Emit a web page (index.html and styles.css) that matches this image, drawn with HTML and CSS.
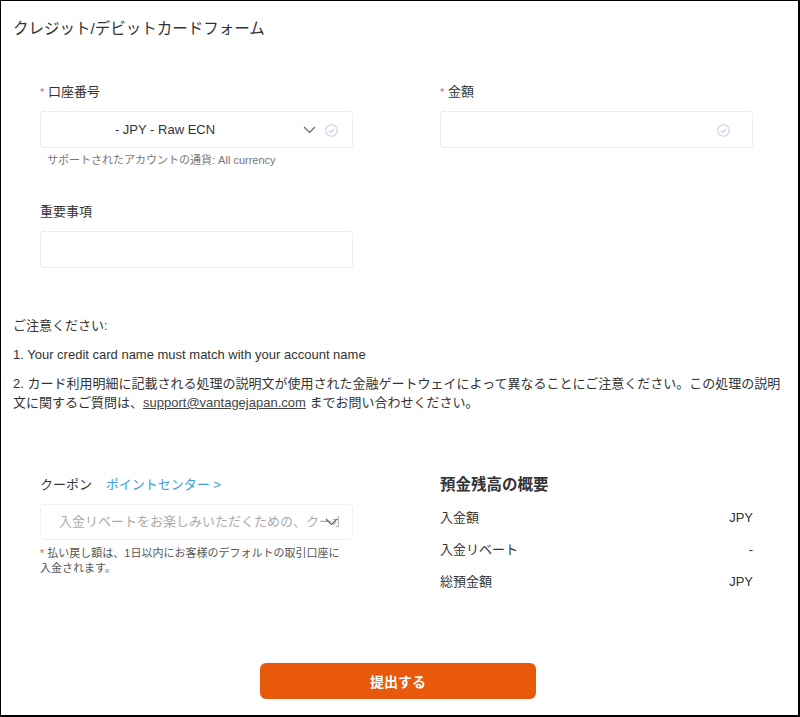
FILE: index.html
```html
<!DOCTYPE html>
<html lang="ja">
<head>
    <meta charset="UTF-8">
    <meta name="viewport" content="width=device-width, initial-scale=1.0">
    <title>クレジット/デビットカードフォーム</title>
    <link rel="stylesheet" href="styles.css">
</head>
<body>
<div class="page">
    <h2 class="title">クレジット/デビットカードフォーム</h2>

    <div class="form-row">
        <div class="field">
            <label class="label"><span class="req">*</span> 口座番号</label>
            <div class="box select">
                <span class="select-text">- JPY - Raw ECN</span>
                <svg class="chev" width="13" height="8" viewBox="0 0 13 8"><path d="M1 1l5.5 5.5L12 1" fill="none" stroke="#666" stroke-width="1.2"/></svg>
                <svg class="ok" width="13" height="13" viewBox="0 0 13 13"><circle cx="6.5" cy="6.5" r="5.7" fill="none" stroke="#c9c9ef" stroke-width="1.1"/><path d="M3.8 6.6l1.9 1.8 3.4-3.5" fill="none" stroke="#c9c9ef" stroke-width="1.1"/></svg>
            </div>
            <p class="hint">サポートされたアカウントの通貨: All currency</p>
        </div>
        <div class="field">
            <label class="label"><span class="req">*</span> 金額</label>
            <div class="box">
                <svg class="ok wide" width="13" height="13" viewBox="0 0 13 13"><circle cx="6.5" cy="6.5" r="5.7" fill="none" stroke="#c9c9ef" stroke-width="1.1"/><path d="M3.8 6.6l1.9 1.8 3.4-3.5" fill="none" stroke="#c9c9ef" stroke-width="1.1"/></svg>
            </div>
        </div>
    </div>

    <div class="form-row second">
        <div class="field">
            <label class="label">重要事項</label>
            <div class="box"></div>
        </div>
    </div>

    <div class="notice">
        <p>ご注意ください:</p>
        <p>1. Your credit card name must match with your account name</p>
        <p>2. カード利用明細に記載される処理の説明文が使用された金融ゲートウェイによって異なることにご注意ください。この処理の説明文に関するご質問は、<a href="#">support@vantagejapan.com</a> までお問い合わせください。</p>
    </div>

    <div class="form-row bottom">
        <div class="field">
            <div class="label">クーポン <a class="points" href="#">ポイントセンター &gt;</a></div>
            <div class="box coupon">
                <span class="placeholder">入金リベートをお楽しみいただくための、クーポンを選択してください</span>
                <svg class="chev" width="13" height="8" viewBox="0 0 13 8"><path d="M1 1l5.5 5.5L12 1" fill="none" stroke="#666" stroke-width="1.2"/></svg>
            </div>
            <p class="refund"><span class="req">*</span> 払い戻し額は、1日以内にお客様のデフォルトの取引口座に入金されます。</p>
        </div>
        <div class="summary">
            <h3>預金残高の概要</h3>
            <div class="row"><span>入金額</span><span>JPY</span></div>
            <div class="row"><span>入金リベート</span><span>-</span></div>
            <div class="row"><span>総預金額</span><span>JPY</span></div>
        </div>
    </div>

    <div class="actions">
        <button class="submit">提出する</button>
    </div>
</div>
</body>
</html>
```

FILE: styles.css
```css
body {
    margin: 0;
    font-family: "Liberation Sans", "Noto Sans CJK JP", sans-serif;
    color: #333;
}
.page {
    width: 800px;
    height: 717px;
    box-sizing: border-box;
    border: 1px solid #000;
    border-right-width: 2px;
    border-bottom-width: 2px;
    padding: 0 12px;
}
.title {
    margin: 18px 0 0;
    font-size: 15.5px;
    line-height: 20px;
    font-weight: normal;
    color: #333;
}
.form-row {
    display: grid;
    grid-template-columns: 313px 313px;
    column-gap: 87px;
    padding-left: 27px;
    margin-top: 44px;
}
.form-row.second {
    margin-top: 35px;
}
.label {
    display: block;
    font-size: 13px;
    line-height: 18px;
    margin-bottom: 10px;
}
.req {
    color: #e0654a;
    font-size: 11px;
}
.box {
    position: relative;
    height: 37px;
    box-sizing: border-box;
    border: 1px dotted #d9d9d9;
    border-radius: 4px;
}
.select {
    display: flex;
    align-items: center;
}
.select-text {
    flex: 1;
    text-align: center;
    padding-right: 63px;
    font-size: 13px;
}
.chev {
    position: absolute;
    right: 36px;
    top: 14px;
}
.ok {
    position: absolute;
    right: 14px;
    top: 12px;
}
.ok.wide {
    right: 22px;
}
.hint {
    margin: 4px 0 0 7px;
    font-size: 11px;
    line-height: 16px;
    color: #777;
}
.notice {
    margin-top: 48px;
    font-size: 13px;
    line-height: 19px;
}
.notice p {
    margin: 0 0 10px;
}
.notice a {
    color: #444;
}
.form-row.bottom {
    margin-top: 64px;
}
.points {
    color: #3a9fd6;
    text-decoration: none;
    margin-left: 10px;
}
.coupon {
    height: 36px;
    overflow: hidden;
    border-color: #e3e3e3;
}
.placeholder {
    display: block;
    white-space: nowrap;
    overflow: hidden;
    width: 280px;
    padding-left: 18px;
    line-height: 34px;
    font-size: 13px;
    color: #aaa;
}
.coupon .chev {
    right: 14px;
    top: 13px;
}
.refund {
    margin: 6px 0 0;
    font-size: 11px;
    line-height: 15px;
    color: #555;
    width: 310px;
}
.summary h3 {
    margin: 0;
    font-size: 15.5px;
    line-height: 18px;
    font-weight: bold;
    color: #333;
}
.summary .row {
    display: flex;
    justify-content: space-between;
    font-size: 13px;
    line-height: 20px;
    margin-top: 12px;
}
.summary .row:first-of-type {
    margin-top: 14px;
}
.actions {
    margin-top: 71px;
    padding-left: 247px;
}
.submit {
    width: 276px;
    height: 36px;
    background-color: #e8590c;
    color: white;
    border: none;
    border-radius: 6px;
    font-family: inherit;
    font-size: 14px;
    font-weight: bold;
    cursor: pointer;
}
```
